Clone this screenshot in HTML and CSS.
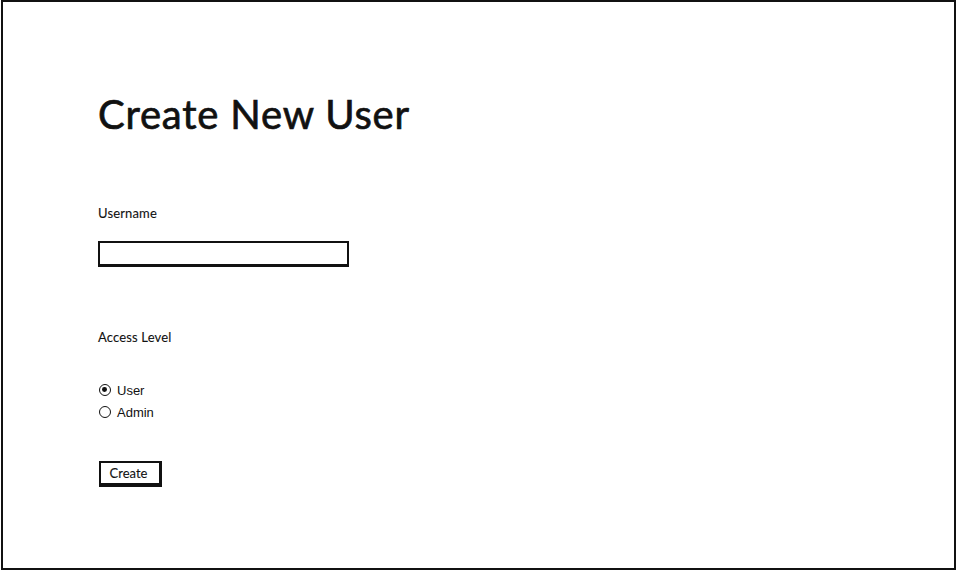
FILE: index.html
```html
<!DOCTYPE html>
<html>
<head>
<meta charset="utf-8">
<link rel="stylesheet" href="styles.css">
</head>
<body>
<div class="frame">
  <h1 class="title">Create New User</h1>
  <div class="field-label username-label">Username</div>
  <div class="textbox"></div>
  <div class="field-label access-label">Access Level</div>
  <div class="radios">
    <div class="radio-row"><span class="radio checked"></span><span class="radio-text">User</span></div>
    <div class="radio-row"><span class="radio"></span><span class="radio-text">Admin</span></div>
  </div>
  <div class="button">Create</div>
</div>
</body>
</html>
```
FILE: styles.css
```css
html, body {
  margin: 0;
  padding: 0;
  background: #fff;
}
.frame {
  box-sizing: border-box;
  width: 955px;
  height: 570px;
  margin-left: 1px;
  border: 2px solid #111;
  padding: 0 0 0 95px;
  font-family: "Lato", "Noto Sans", sans-serif;
  color: #111;
}
.title {
  margin: 0;
  padding-top: 88px;
  font-size: 40px;
  font-weight: 400;
  line-height: 48px;
  letter-spacing: 0.8px;
  -webkit-text-stroke: 0.7px #111;
}
.field-label {
  font-size: 13px;
  line-height: 16px;
  letter-spacing: 0.15px;
  -webkit-text-stroke: 0.1px #111;
}
.username-label {
  margin-top: 67px;
}
.textbox {
  box-sizing: border-box;
  width: 251px;
  height: 26px;
  margin-top: 20px;
  border: 2px solid #111;
  border-bottom-width: 3px;
}
.access-label {
  margin-top: 62px;
}
.radios {
  margin-top: 37px;
  display: flex;
  flex-direction: column;
  gap: 6px;
  font-family: "Liberation Sans", Arial, sans-serif;
  font-size: 13px;
}
.radio-row {
  display: flex;
  align-items: center;
  gap: 6px;
  height: 16px;
  padding-left: 1px;
}
.radio {
  box-sizing: border-box;
  width: 12px;
  height: 12px;
  border: 1.4px solid #111;
  border-radius: 50%;
  position: relative;
}
.radio.checked::after {
  content: "";
  position: absolute;
  left: 2.2px;
  top: 2.2px;
  width: 4.8px;
  height: 4.8px;
  border-radius: 50%;
  background: #111;
}
.button {
  box-sizing: border-box;
  width: 63px;
  height: 26px;
  margin-top: 41px;
  margin-left: 1px;
  border: 2px solid #111;
  border-right-width: 3px;
  border-bottom-width: 4px;
  font-size: 13px;
  line-height: 20px;
  text-align: center;
  padding-right: 3px;
  -webkit-text-stroke: 0.1px #111;
}
```
